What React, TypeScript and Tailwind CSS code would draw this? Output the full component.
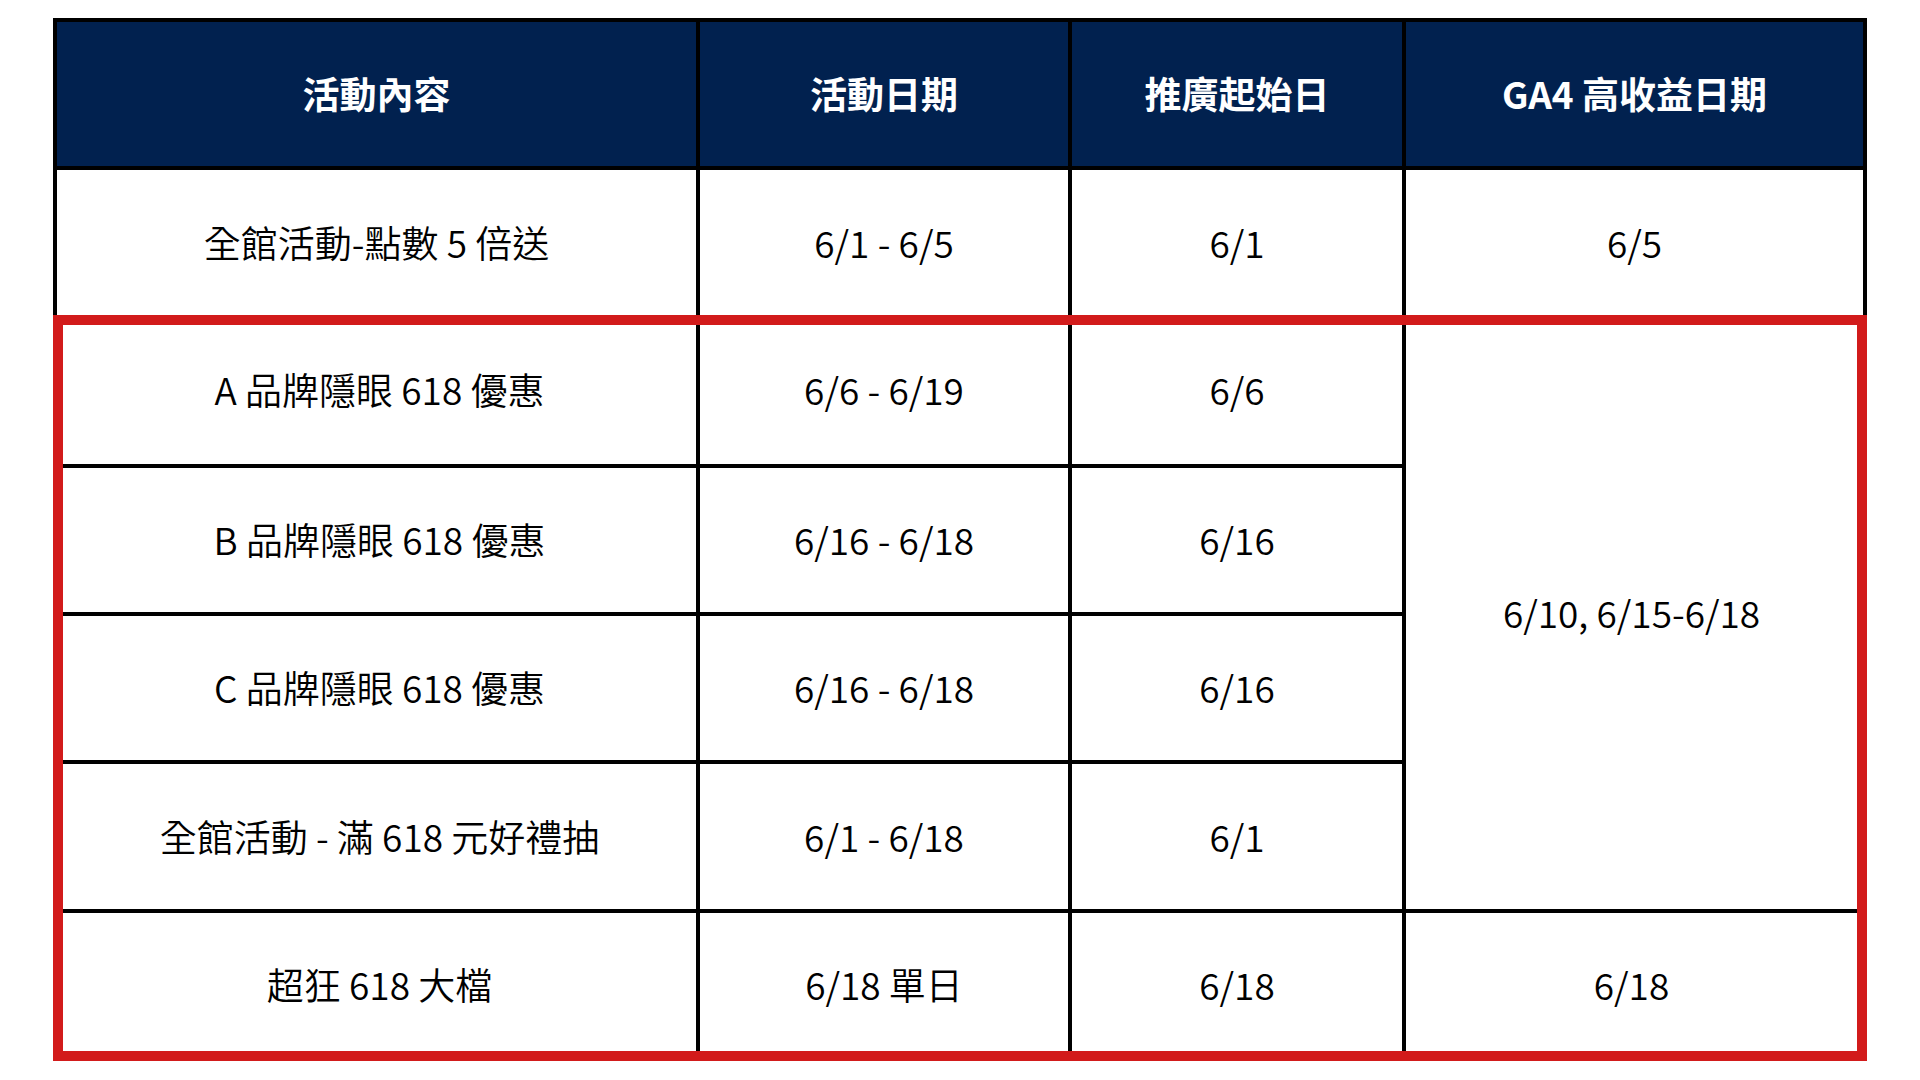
import React from "react";

type Row = { name: string; date: string; start: string };

const topCols = "grid grid-cols-[643px_372px_334px_457px]";
const bottomCols = "grid grid-cols-[637px_372px_334px_451px]";

// heights follow the 148px row pitch; the first lower row sits partly under the red frame
const lowerRows: (Row & { h: string })[] = [
  { name: "A 品牌隱眼 618 優惠", date: "6/6 - 6/19", start: "6/6", h: "h-[143px] pb-[10px]" },
  { name: "B 品牌隱眼 618 優惠", date: "6/16 - 6/18", start: "6/16", h: "h-[148px]" },
  { name: "C 品牌隱眼 618 優惠", date: "6/16 - 6/18", start: "6/16", h: "h-[148px]" },
  { name: "全館活動 - 滿 618 元好禮抽", date: "6/1 - 6/18", start: "6/1", h: "h-[149px]" },
];

const Cell: React.FC<{ className?: string; children?: React.ReactNode }> = ({
  className = "",
  children,
}) => (
  <div className={`flex items-center justify-center text-center ${className}`}>{children}</div>
);

export default function App() {
  return (
    <div
      className="min-h-[1080px] w-[1920px] bg-white pt-[18px] pl-[53px] text-[37px] font-[350] text-black"
      style={{ fontFamily: '"Noto Sans CJK TC", "Noto Sans", sans-serif' }}
    >
      <div className="w-[1814px]">
        {/* header + first row */}
        <div className="border-x-4 border-t-4 border-black">
          <div className={`${topCols} bg-[#01214f] font-bold text-white`}>
            <Cell className="h-[148px] border-r-4 border-b-4 border-black">活動內容</Cell>
            <Cell className="h-[148px] border-r-4 border-b-4 border-black">活動日期</Cell>
            <Cell className="h-[148px] border-r-4 border-b-4 border-black">推廣起始日</Cell>
            <Cell className="h-[148px] border-b-4 border-black">GA4 高收益日期</Cell>
          </div>
          <div className={topCols}>
            <Cell className="h-[145px] border-r-4 border-black">全館活動-點數 5 倍送</Cell>
            <Cell className="h-[145px] border-r-4 border-black">6/1 - 6/5</Cell>
            <Cell className="h-[145px] border-r-4 border-black">6/1</Cell>
            <Cell className="h-[145px]">6/5</Cell>
          </div>
        </div>

        {/* highlighted block */}
        <div className="border-[10px] border-[#d21b1b]">
          <div className={`${bottomCols} grid-rows-[143px_148px_148px_149px_138px]`}>
            {lowerRows.map((r, i) => (
              <React.Fragment key={r.name}>
                <Cell className={`${r.h} border-r-4 border-b-4 border-black`}>{r.name}</Cell>
                <Cell className={`${r.h} border-r-4 border-b-4 border-black`}>{r.date}</Cell>
                <Cell className={`${r.h} border-r-4 border-b-4 border-black`}>{r.start}</Cell>
                {i === 0 && (
                  <Cell className="row-span-4 border-b-4 border-black pb-[9px]">6/10, 6/15-6/18</Cell>
                )}
              </React.Fragment>
            ))}
            <Cell className="h-[138px] border-r-4 border-black pt-[6px]">超狂 618 大檔</Cell>
            <Cell className="h-[138px] border-r-4 border-black pt-[6px]">6/18 單日</Cell>
            <Cell className="h-[138px] border-r-4 border-black pt-[6px]">6/18</Cell>
            <Cell className="h-[138px] pt-[6px]">6/18</Cell>
          </div>
        </div>
      </div>
    </div>
  );
}
